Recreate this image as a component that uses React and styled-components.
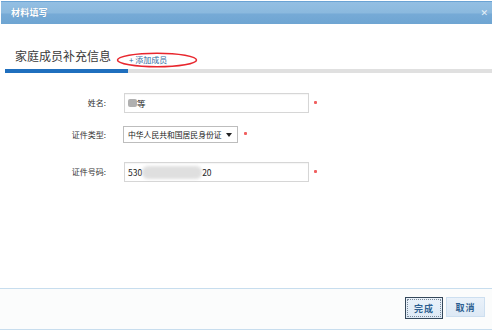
import React from "react";
import styled, { createGlobalStyle } from "styled-components";

const Global = createGlobalStyle`
  html, body { margin: 0; padding: 0; background: #ffffff; }
  body { font-family: "Noto Sans CJK SC", "Noto Sans", sans-serif; }
`;

const Dialog = styled.div`
  width: 492px;
  margin-top: 1px;
  display: flex;
  flex-direction: column;
  background: #ffffff;
`;

const TitleBar = styled.div`
  margin-left: 1px;
  height: 22px;
  border-top: 1px solid #6aa3d4;
  background: linear-gradient(#93bfe3 0%, #8bb9de 48%, #76aad6 56%, #6ea5d2 100%);
  display: flex;
  align-items: center;
  justify-content: space-between;
  padding: 0 4px 0 10px;
`;

const Title = styled.span`
  color: #ffffff;
  font-size: 9px;
  font-weight: bold;
  line-height: 12px;
  letter-spacing: 0.2px;
  text-shadow: 0 0 1px rgba(60, 110, 160, 0.6);
`;

const Close = styled.span`
  color: #e6f0f8;
  font-family: "DejaVu Sans", sans-serif;
  font-size: 9px;
  font-weight: bold;
  line-height: 10px;
`;

const Body = styled.div`
  height: 264px;
  display: flex;
  flex-direction: column;
`;

const TabHeader = styled.div`
  height: 45px;
  display: flex;
  align-items: flex-end;
`;

const Tab = styled.div`
  width: 113px;
  margin-left: 5px;
  padding-left: 10px;
  padding-bottom: 5px;
  font-size: 12px;
  line-height: 16px;
  color: #3a3a3a;
  white-space: nowrap;
`;

const AddLink = styled.span`
  position: relative;
  margin-left: 1px;
  padding-bottom: 4px;
  font-size: 8px;
  line-height: 11px;
  color: #2f6aa0;
  white-space: nowrap;
`;

const Mark = styled.svg`
  position: absolute;
  left: -13px;
  top: -2px;
  overflow: visible;
`;

const TabLine = styled.div`
  margin-left: 5px;
  height: 4px;
  background: #e0e0e0;
  display: flex;
`;

const TabActive = styled.div`
  width: 123px;
  background: #1f6fbe;
`;

const Form = styled.div`
  padding-top: 20px;
  display: flex;
  flex-direction: column;
`;

const Row = styled.div`
  display: grid;
  grid-template-columns: 107px auto 1fr;
  align-items: center;
  margin-top: ${(p) => p.$mt || 0}px;
`;

const Label = styled.span`
  text-align: right;
  font-size: 8px;
  line-height: 10px;
  color: #333333;
  padding-right: 1px;
`;

const Input = styled.div`
  box-sizing: border-box;
  width: 185px;
  height: 20px;
  margin-left: 17px;
  border: 1px solid #d6d6d6;
  box-shadow: inset 0 1px 1px rgba(0, 0, 0, 0.04);
  display: flex;
  align-items: center;
  padding-left: 3px;
  font-size: 8.5px;
  color: #222;
  background: #fff;
`;

const Blur = styled.span`
  display: inline-block;
  width: ${(p) => p.$w}px;
  height: ${(p) => p.$h || 12}px;
  border-radius: ${(p) => (p.$h && p.$h < 10 ? 2 : 6)}px;
  background: ${(p) => p.$c || "#d2d2d2"};
  filter: blur(${(p) => p.$b || 1.5}px);
  opacity: ${(p) => p.$o || 0.7};
`;

const Select = styled.div`
  box-sizing: border-box;
  width: 115px;
  height: 17px;
  margin-left: 16px;
  border: 1px solid #bdbdbd;
  display: flex;
  align-items: center;
  justify-content: space-between;
  padding: 0 5px 0 4px;
  font-size: 7.8px;
  color: #222;
  white-space: nowrap;
  background: #fff;
`;

const Star = styled.span`
  display: inline-block;
  justify-self: start;
  width: 3px;
  height: 3px;
  background: #f06060;
  margin-left: ${(p) => p.$ml}px;
  margin-top: -2px;
  border-radius: 1px;
`;

const Footer = styled.div`
  box-sizing: border-box;
  height: 42px;
  border-top: 1px solid #c7ddee;
  border-bottom: 1px solid #c7ddee;
  background: #fbfcfc;
  display: flex;
  justify-content: flex-end;
  align-items: flex-start;
  gap: 3px;
  padding: 8px 7px 0 0;
`;

const Button = styled.button`
  box-sizing: border-box;
  width: ${(p) => p.$w}px;
  height: ${(p) => p.$h}px;
  padding: 0;
  font-family: "Noto Sans CJK SC", sans-serif;
  font-size: 9px;
  font-weight: bold;
  color: #2d5f91;
  background: linear-gradient(#eaf2fa, #dde9f5);
  border: 1px solid ${(p) => (p.$focus ? "#34475a" : "#cddff0")};
  outline: ${(p) => (p.$focus ? "1px dotted #7a8a9a" : "none")};
  outline-offset: -3px;
  letter-spacing: 1px;
`;

export default function App() {
  return (
    <>
      <Global />
      <Dialog>
        <TitleBar>
          <Title>材料填写</Title>
          <Close>✕</Close>
        </TitleBar>
        <Body>
          <TabHeader>
            <Tab>家庭成员补充信息</Tab>
            <AddLink>
              + 添加成员
              <Mark width="82" height="16" viewBox="0 0 82 16">
                <ellipse cx="41" cy="8" rx="39.5" ry="6.8" fill="none" stroke="#e8262d" strokeWidth="1.5" />
              </Mark>
            </AddLink>
          </TabHeader>
          <TabLine>
            <TabActive />
          </TabLine>
          <Form>
            <Row>
              <Label>姓名:</Label>
              <Input>
                <Blur $w={9} $h={8} $o={0.9} $c="#a8a8a8" $b={0.6} />
                等
              </Input>
              <Star $ml={5} />
            </Row>
            <Row $mt={13}>
              <Label>证件类型:</Label>
              <Select>
                中华人民共和国居民身份证
                <svg width="6" height="4" viewBox="0 0 6 4">
                  <path d="M0 0 L6 0 L3 4 Z" fill="#222" />
                </svg>
              </Select>
              <Star $ml={6} />
            </Row>
            <Row $mt={19}>
              <Label>证件号码:</Label>
              <Input>
                530
                <Blur $w={60} $h={13} />
                20
              </Input>
              <Star $ml={5} />
            </Row>
          </Form>
        </Body>
        <Footer>
          <Button $w={38} $h={22} $focus>完成</Button>
          <Button $w={39} $h={20}>取消</Button>
        </Footer>
      </Dialog>
    </>
  );
}
